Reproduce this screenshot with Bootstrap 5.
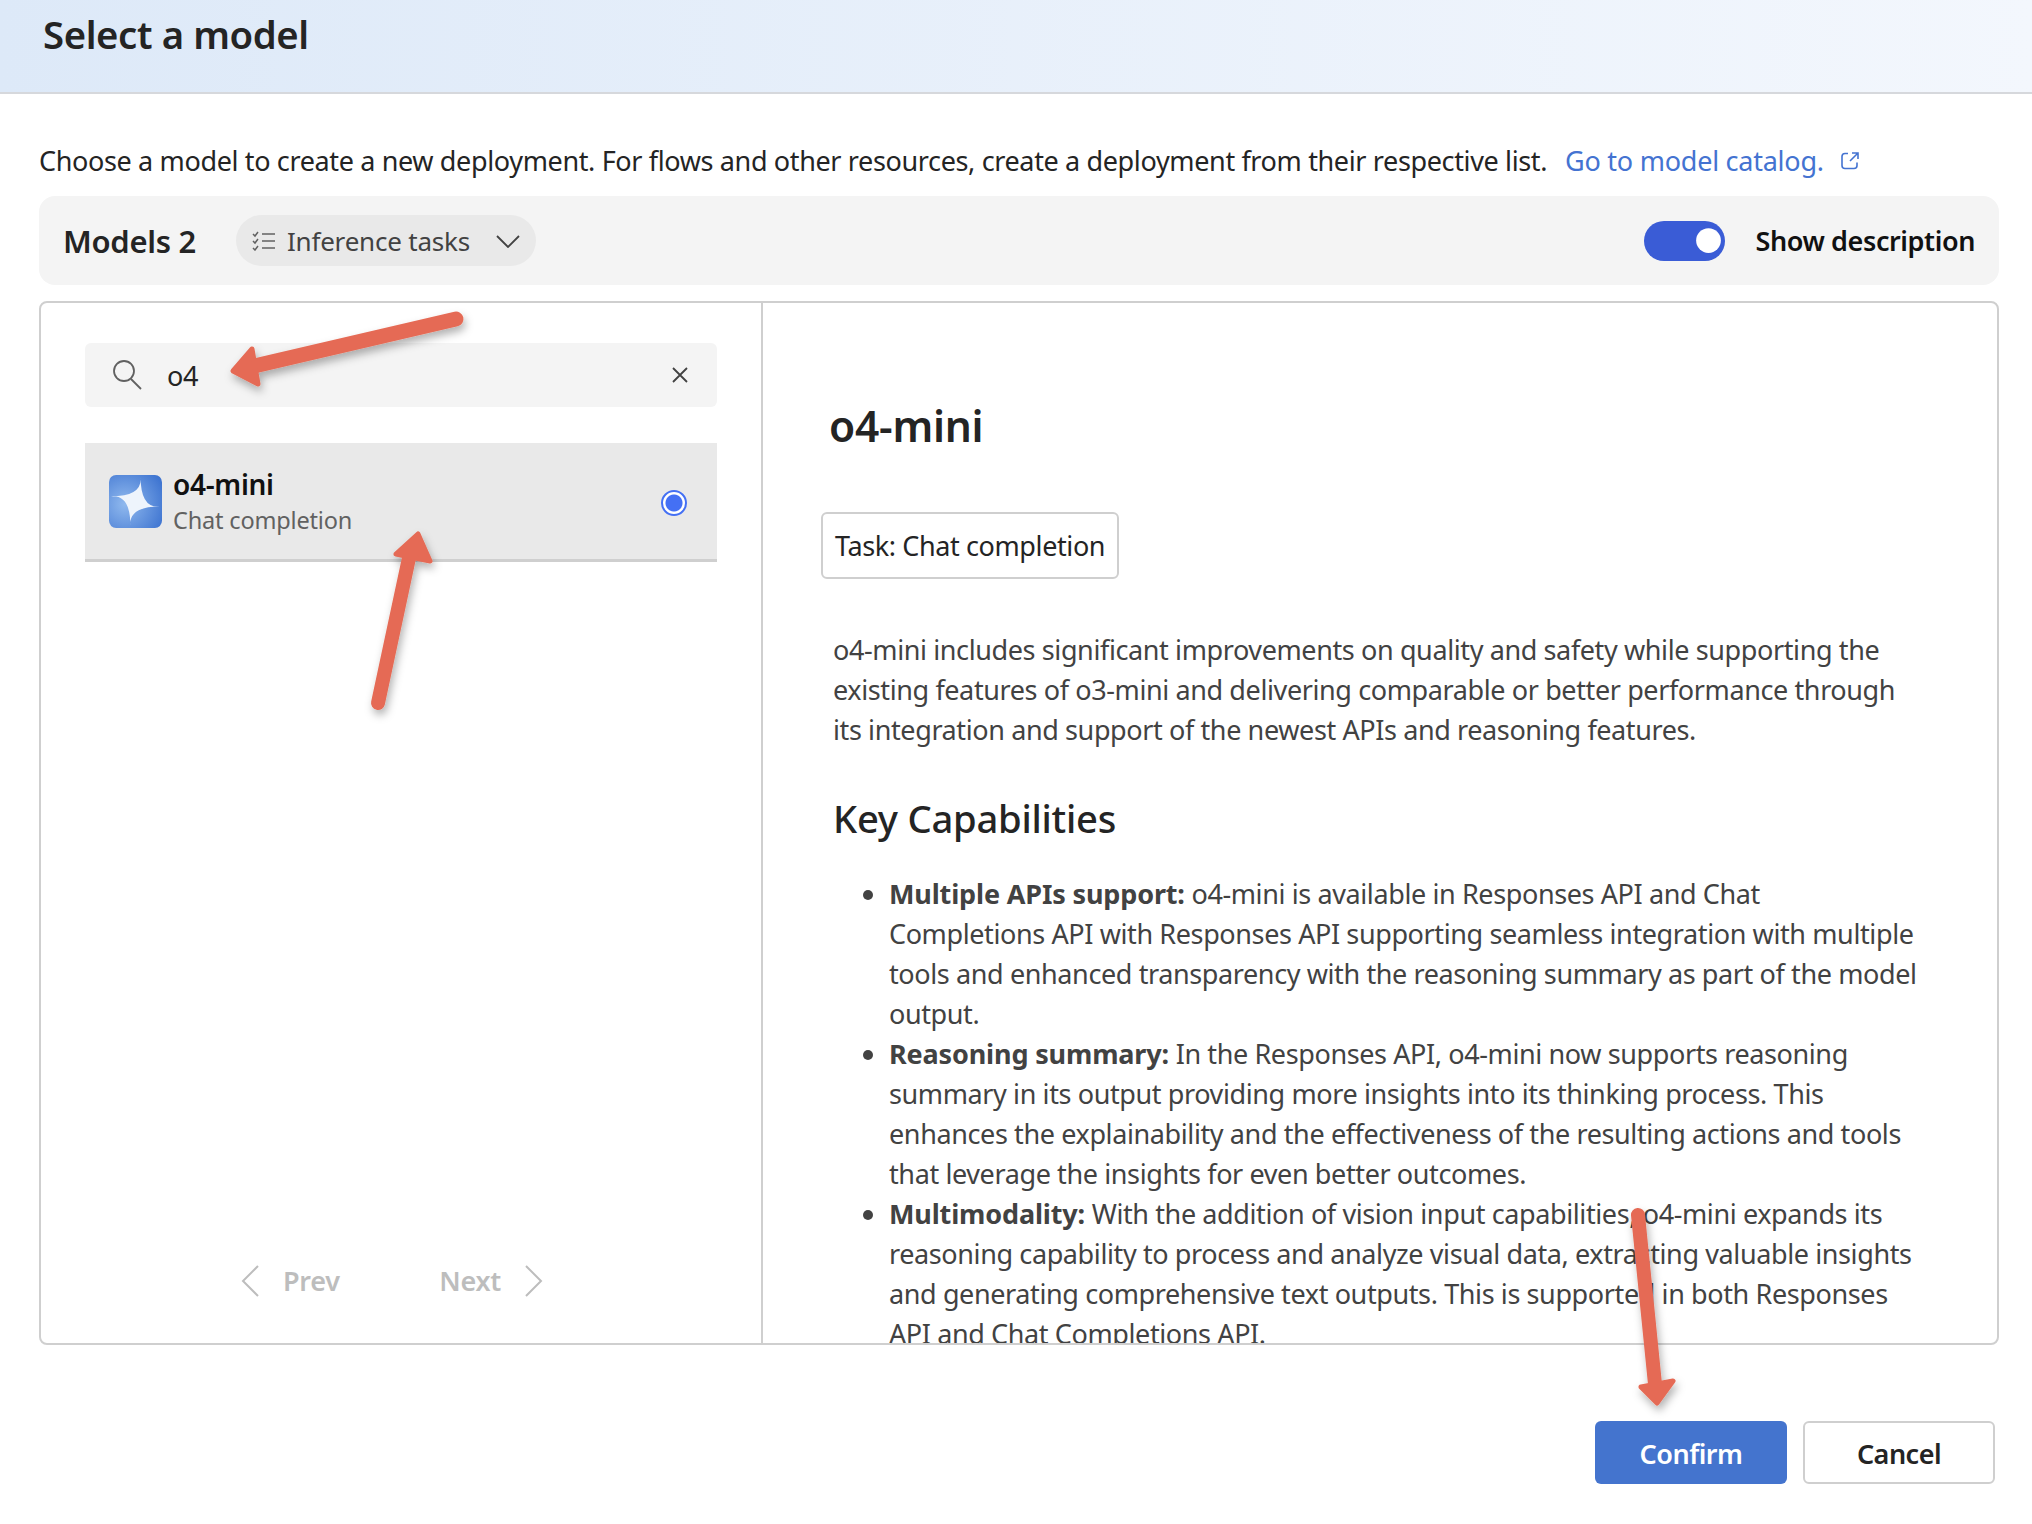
<!DOCTYPE html>
<html lang="en">
<head>
<meta charset="utf-8">
<title>Select a model</title>
<link href="https://cdn.jsdelivr.net/npm/bootstrap@5.3.0/dist/css/bootstrap.min.css" rel="stylesheet">
<style>
html,body{margin:0;height:1524px;overflow:hidden;background:#fff}
body{font-family:"Noto Sans","Open Sans",sans-serif;font-size:27px;line-height:40px;color:#242424;position:relative;letter-spacing:-.25px}
.dlg-head{height:94px;background:linear-gradient(90deg,#dde9f8,#f3f7fd);border-bottom:2px solid #d6d8dc;padding:8px 0 0 43px}
.dlg-title{font-size:38.3px;line-height:52px;font-weight:600;margin:0;color:#242424;letter-spacing:-.4px}
.dlg-body{padding:47px 33px 0 39px}
.intro{height:55px;white-space:nowrap}
.intro-copy{letter-spacing:-.36px}
.cat-link{color:#4473d1;text-decoration:none;margin-left:18px}
.tool-bar{height:89px;background:#f4f4f4;border-radius:16px;padding:0 24px 0 24px}
.tool-name{font-size:31px;font-weight:600;margin-right:40px;letter-spacing:-.3px}
.task-pill{height:51px;width:300px;border-radius:26px;background:#e9e9e9;color:#424242;padding:0 15px 0 16px;border:0;font-size:26px;letter-spacing:-.2px}
.task-label{margin-left:11px}
.show-label{font-weight:600;color:#111;font-size:27px;margin-left:30px;letter-spacing:-.4px}
.switch-in.form-check-input{width:81px;height:40px;margin:0;background-color:#3a5cd6;border:0;float:none;background-size:33px;background-position:right 6px center}
.form-switch{padding:0;margin:0;min-height:0;display:flex}
.pane-box{margin-top:16px;height:1044px;border:2px solid #cfcfcf;border-radius:8px;overflow:hidden}
.pane-left{width:722px;flex:none;border-right:2px solid #cfcfcf;padding:40px 44px 0 44px;height:100%}
.search-box{height:64px;background:#f4f4f4;border-radius:6px;padding:0 28px 0 26px}
.search-val{margin-left:24px;flex:1;color:#242424;font-size:27px;padding-top:2px}
.model-row{margin-top:36px;height:119px;background:#e9e9e9;border-bottom:3px solid #cfcfcf;padding:0 30px 0 24px}
.model-text{padding-top:2px}
.model-name{font-weight:600;font-size:28px;line-height:36px;color:#111;letter-spacing:-.3px}
.model-sub{font-size:23.5px;line-height:36px;color:#616161;letter-spacing:-.17px}
.model-logo{width:53px;height:53px;margin-right:11px;flex:none}
.dot-radio.form-check-input{width:26px;height:26px;margin:3px 0 0;border:2px solid #4470f4;background-color:#fff;background-image:radial-gradient(circle,#4470f4 0 8px,#fff 9px)}
.pager{position:absolute;left:241px;top:1261px;width:302px;color:#bdbdbd;font-weight:600;font-size:27px}
.pane-right{flex:1;height:100%;overflow:hidden;padding:0 0 0 70px;color:#424242;letter-spacing:-.39px}
.detail-title{font-size:42.5px;line-height:54px;font-weight:600;color:#242424;margin:0;padding-top:96px;margin-left:-4px;letter-spacing:-.25px}
.task-chip{display:inline-block;margin:59px 0 0 -12px;height:67px;line-height:63px;padding:0 12px;border:2px solid #cfcfcf;border-radius:6px;color:#242424}
.detail-copy{margin:51px 0 0 0;width:1090px}
.cap-title{font-size:38.2px;line-height:52px;font-weight:500;color:#242424;margin:42px 0 0;letter-spacing:-.25px}
.cap-list{margin:30px 0 0;padding-left:56px;width:1092px}
.cap-list b{font-weight:700;color:#424242;letter-spacing:-.15px}
.foot-btn{width:192px;height:63px;border-radius:6px;font-size:27px;font-weight:600;padding:2px 0 0;line-height:1;letter-spacing:-.5px}
.btn-ok,.btn-ok:hover{background:#4474ce;color:#fff;border:0}
.btn-no,.btn-no:hover{background:#fff;color:#242424;border:2px solid #cfcfcf}
.foot-row{margin-top:76px;gap:16px;margin-right:-33px;padding-right:37px}
.arrows{position:absolute;left:0;top:0;pointer-events:none}
</style>
</head>
<body>
<div class="dlg-head"><h1 class="dlg-title">Select a model</h1></div>
<div class="dlg-body">
  <div class="intro d-flex align-items-start">
    <span class="intro-copy">Choose a model to create a new deployment. For flows and other resources, create a deployment from their respective list.</span>
    <a class="cat-link d-inline-flex align-items-center" href="#">Go to model catalog.
      <svg class="ms-3" width="20" height="20" viewBox="0 0 20 20" fill="none" stroke="#4473d1" stroke-width="1.6"><path d="M8 2.5H5a3 3 0 0 0-3 3v9a3 3 0 0 0 3 3h9a3 3 0 0 0 3-3v-3"/><path d="M12 2h6v6M18 2l-8 8"/></svg>
    </a>
  </div>
  <div class="tool-bar d-flex align-items-center">
    <span class="tool-name">Models 2</span>
    <button class="task-pill d-flex align-items-center" type="button">
      <svg width="24" height="20" viewBox="0 0 24 20" fill="none" stroke="#616161" stroke-width="1.5"><path d="M1 3l2 2 3-4M1 10l2 2 3-4M1 17l2 2 3-4M10 3h13M10 10h13M10 17h13"/></svg>
      <span class="task-label">Inference tasks</span>
      <svg class="ms-auto" width="26" height="14" viewBox="0 0 26 14" fill="none" stroke="#424242" stroke-width="1.8"><path d="M2 2l11 11L24 2"/></svg>
    </button>
    <div class="ms-auto d-flex align-items-center">
      <div class="form-check form-switch"><input class="form-check-input switch-in" type="checkbox" role="switch" checked aria-label="Show description"></div>
      <span class="show-label">Show description</span>
    </div>
  </div>
  <div class="pane-box d-flex">
    <div class="pane-left">
      <div class="search-box d-flex align-items-center">
        <svg width="32" height="32" viewBox="0 0 32 32" fill="none" stroke="#616161" stroke-width="1.8"><circle cx="13" cy="12" r="10"/><path d="M20 20l10 10"/></svg>
        <span class="search-val">o4</span>
        <svg width="18" height="18" viewBox="0 0 18 18" fill="none" stroke="#424242" stroke-width="1.8"><path d="M2 2l14 14M16 2L2 16"/></svg>
      </div>
      <div class="model-row d-flex align-items-center">
        <svg class="model-logo" viewBox="0 0 52 52"><defs><radialGradient id="lg" cx=".3" cy=".55" r=".8"><stop offset="0" stop-color="#90b9ee"/><stop offset="1" stop-color="#3f75d1"/></radialGradient></defs><rect width="52" height="52" rx="7" fill="url(#lg)"/><path d="M31 2Q31 33 50 31Q19 31 21 50Q21 19 2 21Q33 21 31 2Z" fill="#eef4fc"/></svg>
        <div class="flex-grow-1 model-text">
          <div class="model-name">o4-mini</div>
          <div class="model-sub">Chat completion</div>
        </div>
        <input class="form-check-input dot-radio" type="radio" checked aria-label="o4-mini">
      </div>
    </div>
    <div class="pane-right">
      <h2 class="detail-title">o4-mini</h2>
      <span class="task-chip">Task: Chat completion</span>
      <p class="detail-copy">o4-mini includes significant improvements on quality and safety while supporting the existing features of o3-mini and delivering comparable or better performance through its integration and support of the newest APIs and reasoning features.</p>
      <h3 class="cap-title">Key Capabilities</h3>
      <ul class="cap-list">
        <li><b>Multiple APIs support:</b> o4-mini is available in Responses API and Chat<br>Completions API with Responses API supporting seamless integration with multiple tools and enhanced transparency with the reasoning summary as part of the model output.</li>
        <li><b>Reasoning summary:</b> In the Responses API, o4-mini now supports reasoning summary in its output providing more insights into its thinking process. This enhances the explainability and the effectiveness of the resulting actions and tools that leverage the insights for even better outcomes.</li>
        <li><b>Multimodality:</b> With the addition of vision input capabilities, o4-mini expands its reasoning capability to process and analyze visual data, extracting valuable insights and generating comprehensive text outputs. This is supported in both Responses API and Chat Completions API.</li>
      </ul>
    </div>
  </div>
  <div class="foot-row d-flex justify-content-end">
    <button class="btn foot-btn btn-ok" type="button">Confirm</button>
    <button class="btn foot-btn btn-no" type="button">Cancel</button>
  </div>
</div>
<div class="pager d-flex align-items-center">
  <svg width="18" height="32" viewBox="0 0 18 32" fill="none" stroke="#bdbdbd" stroke-width="2"><path d="M17 1L2 16l15 15"/></svg>
  <span class="ms-4">Prev</span>
  <span class="ms-auto">Next</span>
  <svg class="ms-4" width="18" height="32" viewBox="0 0 18 32" fill="none" stroke="#bdbdbd" stroke-width="2"><path d="M1 1l15 15L1 31"/></svg>
</div>
<svg class="arrows" width="2032" height="1524" viewBox="0 0 2032 1524">
  <defs><filter id="sh" x="-30%" y="-30%" width="160%" height="160%"><feDropShadow dx="2" dy="5" stdDeviation="4" flood-color="#000" flood-opacity=".3"/></filter></defs>
  <g fill="#e56b55" stroke="#e56b55" stroke-linejoin="round" stroke-linecap="round" filter="url(#sh)">
    <path d="M456 319L250 367" stroke-width="15" fill="none"/>
    <path d="M252 349L233 371L258 384Z" stroke-width="5"/>
    <path d="M378 703L409 558" stroke-width="14" fill="none"/>
    <path d="M396 554L418 534L430 561Z" stroke-width="5"/>
    <path d="M1638 1215L1655 1384" stroke-width="14" fill="none"/>
    <path d="M1641 1387L1657 1403L1673 1381Z" stroke-width="5"/>
  </g>
</svg>
</body>
</html>
